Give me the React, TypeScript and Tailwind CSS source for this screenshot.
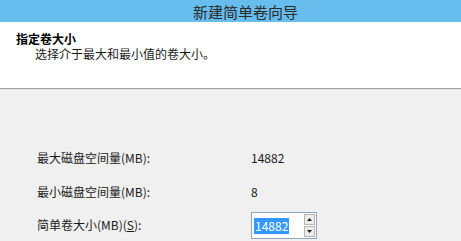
export default function App() {
  const font = { fontFamily: '"Noto Sans CJK SC", "Noto Sans", sans-serif' };

  return (
    <div
      className="w-[461px] h-[241px] overflow-hidden flex flex-col bg-[#f0f0f0] text-[12px] text-[#1a1a1a]"
      style={font}
    >
      {/* title bar */}
      <div className="h-[22px] bg-[#66bdee] flex items-center justify-center pl-[30px]">
        <span className="text-[15px] leading-none text-[#2b2b2b]">新建简单卷向导</span>
      </div>

      {/* header */}
      <div className="h-[66px] bg-white pl-[16px] pt-[10px]">
        <p className="font-bold leading-[14px] text-black">指定卷大小</p>
        <p className="pl-[19px] leading-[14px] mt-[1px]">选择介于最大和最小值的卷大小。</p>
      </div>
      <div className="h-px bg-[#a0a0a0]" />
      <div className="h-px bg-[#e3e3e3]" />

      {/* body */}
      <div className="flex-1 pl-[37px] pt-[58px]">
        <div className="flex items-center h-[20px]">
          <span className="w-[214px]">最大磁盘空间量(MB):</span>
          <span>14882</span>
        </div>
        <div className="flex items-center h-[20px] mt-[14px]">
          <span className="w-[214px]">最小磁盘空间量(MB):</span>
          <span>8</span>
        </div>
        <div className="flex items-start mt-[10px]">
          <span className="w-[214px] mt-[3px] leading-[20px]">
            简单卷大小(MB)(<span className="underline">S</span>):
          </span>
          <div className="flex w-[66px] h-[27px] border border-[#8fa6bd] bg-white">
            <div className="flex-1 pl-[2px] pt-[4px]">
              <span className="bg-[#3399ff] text-white leading-[16px] inline-block px-[1px]">14882</span>
            </div>
            <div className="w-[13px] flex flex-col gap-px p-px bg-white">
              <div className="flex-1 bg-[#ececec] border border-[#b5b5b5] flex items-center justify-center">
                <svg width="5" height="3" viewBox="0 0 5 3">
                  <path d="M2.5 0 L5 3 L0 3 Z" fill="#222" />
                </svg>
              </div>
              <div className="flex-1 bg-[#ececec] border border-[#b5b5b5] flex items-center justify-center">
                <svg width="5" height="3" viewBox="0 0 5 3">
                  <path d="M0 0 L5 0 L2.5 3 Z" fill="#222" />
                </svg>
              </div>
            </div>
          </div>
        </div>
      </div>
    </div>
  );
}
